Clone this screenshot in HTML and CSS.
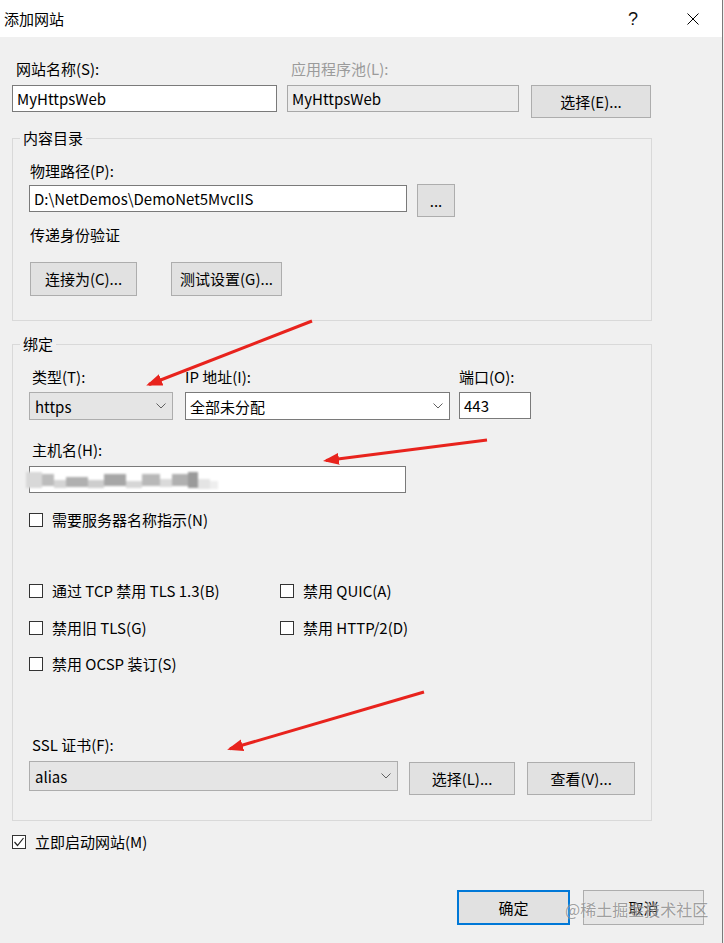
FILE: index.html
```html
<!DOCTYPE html>
<html lang="zh-CN">
<head>
<meta charset="utf-8">
<title>添加网站</title>
<link rel="stylesheet" href="styles.css">
</head>
<body>
<div class="window">
  <div class="titlebar">
    <span class="title">添加网站</span>
    <span class="help">?</span>
    <span class="close">
      <svg width="12" height="12" viewBox="0 0 12 12"><path d="M0.5 0.5 L11.5 11.5 M11.5 0.5 L0.5 11.5" stroke="#000" stroke-width="1" fill="none"/></svg>
    </span>
  </div>

  <div class="content">
    <div class="site-grid">
      <div class="lbl lbl-top">网站名称(S):</div>
      <div class="lbl lbl-top disabled">应用程序池(L):</div>
      <div></div>
      <div class="textbox tb-name">MyHttpsWeb</div>
      <div class="textbox readonly tb-pool">MyHttpsWeb</div>
      <button class="btn btn-pool">选择(E)...</button>
    </div>

    <fieldset class="group group-content">
      <legend>内容目录</legend>
      <div class="lbl lbl-g1 path-label">物理路径(P):</div>
      <div class="path-row">
        <div class="textbox tb-path">D:\NetDemos\DemoNet5MvcIIS</div>
        <button class="btn btn-dots">...</button>
      </div>
      <div class="lbl lbl-g1 auth-label">传递身份验证</div>
      <div class="auth-row">
        <button class="btn btn-connect">连接为(C)...</button>
        <button class="btn btn-test">测试设置(G)...</button>
      </div>
    </fieldset>

    <fieldset class="group group-binding">
      <legend>绑定</legend>
      <div class="bind-grid">
        <div class="lbl lbl-g2">类型(T):</div>
        <div class="lbl lbl-g2 lbl-ip">IP 地址(I):</div>
        <div class="lbl lbl-g2 lbl-port">端口(O):</div>
        <div class="combo combo-list sel-type"><span>https</span><svg class="chev" width="10" height="6" viewBox="0 0 10 6"><polyline points="0.5,0.5 5,5 9.5,0.5" fill="none" stroke="#606060" stroke-width="1"/></svg></div>
        <div class="combo sel-ip"><span>全部未分配</span><svg class="chev" width="10" height="6" viewBox="0 0 10 6"><polyline points="0.5,0.5 5,5 9.5,0.5" fill="none" stroke="#606060" stroke-width="1"/></svg></div>
        <div class="textbox tb-port">443</div>
      </div>

      <div class="lbl lbl-g2 host-label">主机名(H):</div>
      <div class="textbox tb-host">
        <span class="blur">
          <i class="b b1"></i><i class="b b2"></i><i class="b b3"></i><i class="b b4"></i><i class="b b5"></i><i class="b b6"></i><i class="b b7"></i><i class="b b8"></i><i class="b b9"></i><i class="b b10"></i><i class="b b11"></i><i class="b b12"></i><i class="b b13"></i>
        </span>
      </div>

      <div class="check sni-check"><span class="box"></span><span class="ctext">需要服务器名称指示(N)</span></div>

      <div class="check-grid">
        <div class="check"><span class="box"></span><span class="ctext">通过 TCP 禁用 TLS 1.3(B)</span></div>
        <div class="check"><span class="box"></span><span class="ctext">禁用 QUIC(A)</span></div>
        <div class="check"><span class="box"></span><span class="ctext">禁用旧 TLS(G)</span></div>
        <div class="check"><span class="box"></span><span class="ctext">禁用 HTTP/2(D)</span></div>
        <div class="check"><span class="box"></span><span class="ctext">禁用 OCSP 装订(S)</span></div>
      </div>

      <div class="lbl lbl-g2 ssl-label">SSL 证书(F):</div>
      <div class="ssl-row">
        <div class="combo combo-list sel-ssl"><span>alias</span><svg class="chev" width="10" height="6" viewBox="0 0 10 6"><polyline points="0.5,0.5 5,5 9.5,0.5" fill="none" stroke="#606060" stroke-width="1"/></svg></div>
        <button class="btn btn-ssl-select">选择(L)...</button>
        <button class="btn btn-ssl-view">查看(V)...</button>
      </div>
    </fieldset>

    <div class="check start-check"><span class="box checked"><svg width="12" height="12" viewBox="0 0 12 12"><polyline points="1.5,6 4.5,9.5 10.5,2" fill="none" stroke="#222" stroke-width="1.2"/></svg></span><span class="ctext">立即启动网站(M)</span></div>

    <div class="footer">
      <button class="btn btn-ok">确定</button>
      <button class="btn btn-cancel">取消</button>
    </div>
  </div>

  <div class="watermark">@稀土掘金技术社区</div>

  <svg class="arrows" width="724" height="943" viewBox="0 0 724 943">
    <defs>
      <marker id="ah" markerUnits="userSpaceOnUse" markerWidth="16" markerHeight="12" refX="13" refY="6" orient="auto">
        <path d="M0,0 L16,6 L0,12 Z" fill="#e8231d"/>
      </marker>
    </defs>
    <line x1="312" y1="321" x2="149" y2="384.5" stroke="#e8231d" stroke-width="3" marker-end="url(#ah)"/>
    <line x1="487" y1="440" x2="326" y2="460.5" stroke="#e8231d" stroke-width="3" marker-end="url(#ah)"/>
    <line x1="424" y1="692" x2="230" y2="748.8" stroke="#e8231d" stroke-width="3" marker-end="url(#ah)"/>
  </svg>
</div>
</body>
</html>
```

FILE: styles.css
```css
* { box-sizing: border-box; }

html, body {
  margin: 0;
  padding: 0;
  background: #f0f0f0;
}

body {
  font-family: "Noto Sans CJK SC", "Noto Sans", sans-serif;
  font-size: 15px;
  color: #000;
}

.window {
  position: relative;
  width: 723px;
  height: 943px;
  background: #f0f0f0;
  border-right: 1px solid #7a7a7a;
  overflow: hidden;
}

.titlebar {
  height: 37px;
  background: #fff;
  display: flex;
  align-items: center;
  padding-left: 4px;
}

.title {
  font-size: 15px;
  line-height: 20px;
  flex: 1;
}

.help {
  font-family: "Liberation Sans", sans-serif;
  font-size: 18px;
  line-height: 20px;
  width: 12px;
  text-align: center;
  margin-right: 48px;
  color: #111;
}

.close {
  width: 12px;
  height: 12px;
  display: flex;
  margin-right: 23px;
}

.content {
  padding: 22px 18px 0 12px;
}

.lbl {
  height: 20px;
  line-height: 20px;
  white-space: nowrap;
}

.lbl-top { padding-left: 4px; }
.lbl-g1 { padding-left: 1px; }
.lbl-g2 { padding-left: 3px; }
.lbl-ip, .lbl-port { padding-left: 0; }
.disabled { color: #9b9b9b; }

.site-grid {
  display: grid;
  grid-template-columns: 275px 244px 120px;
  grid-template-rows: 20px auto;
  row-gap: 6px;
  align-items: start;
}

.textbox {
  height: 27px;
  background: #fff;
  border: 1px solid #7a7a7a;
  padding: 0 4px;
  line-height: 25px;
  white-space: nowrap;
  overflow: hidden;
}

.readonly {
  background: #ececec;
  border-color: #a8a8a8;
}

.tb-name { width: 265px; }
.tb-pool { width: 232px; }

.btn {
  font-family: inherit;
  font-size: 15px;
  color: #000;
  background: #e1e1e1;
  border: 1px solid #adadad;
  padding: 0;
  margin: 0;
  line-height: 20px;
  display: flex;
  align-items: center;
  justify-content: center;
}

.btn-pool { width: 120px; height: 33px; }

.group {
  margin: 10px 0 0 0;
  width: 640px;
  border: 1px solid #d9d9d9;
  padding: 0 16px;
  min-width: 0;
}

.group legend {
  padding: 0 3px;
  margin-left: -9px;
  line-height: 20px;
  height: 20px;
  font-size: 15px;
}

.group-content { padding-bottom: 24px; }
.group-binding { margin-top: 13px; padding-bottom: 25px; }

.path-label { margin-top: 13px; }

.path-row {
  margin-top: 3px;
  display: flex;
  align-items: flex-start;
  gap: 10px;
}

.tb-path { width: 378px; margin-top: 1px; }
.btn-dots { width: 38px; height: 33px; }

.auth-label { margin-top: 8px; }

.auth-row {
  margin-top: 17px;
  display: flex;
  gap: 34px;
  padding-left: 1px;
}

.btn-connect { width: 107px; height: 34px; }
.btn-test { width: 111px; height: 34px; }

.bind-grid {
  margin-top: 13px;
  display: grid;
  grid-template-columns: 156px 274px 72px;
  grid-template-rows: 20px auto;
  row-gap: 5px;
  align-items: start;
}

.combo {
  height: 28px;
  border: 1px solid #7a7a7a;
  background: #fff;
  display: flex;
  align-items: center;
  justify-content: space-between;
  padding: 0 6px 0 4px;
  white-space: nowrap;
}

.combo-list {
  background: #e5e5e5;
  border-color: #adadad;
  padding-left: 5px;
}

.sel-type { width: 144px; }
.sel-ip { width: 265px; }
.tb-port { width: 72px; }

.chev { flex: none; }

.host-label { margin-top: 20px; }

.tb-host {
  margin-top: 6px;
  width: 377px;
  overflow: visible;
  display: flex;
  align-items: center;
  padding-left: 0;
}

.blur {
  display: flex;
  align-items: center;
  height: 22px;
  margin-left: -4px;
  filter: blur(1.3px);
}

.b {
  display: block;
  height: 12px;
  background: #bdbdbd;
}

.b1 { width: 16px; background: #d8d8d8; height: 16px; }
.b2 { width: 12px; background: #bcbcbc; }
.b3 { width: 12px; background: #d4d4d4; height: 8px; margin-top: 8px; }
.b4 { width: 22px; background: #b0b0b0; height: 10px; margin-top: 4px; }
.b5 { width: 16px; background: #cdcdcd; height: 8px; margin-top: 8px; }
.b6 { width: 22px; background: #a6a6a6; }
.b7 { width: 16px; background: #d6d6d6; height: 7px; margin-top: 9px; }
.b8 { width: 18px; background: #b8b8b8; }
.b9 { width: 12px; background: #dadada; height: 8px; margin-top: 6px; }
.b10 { width: 16px; background: #b0b0b0; height: 12px; }
.b11 { width: 10px; background: #9a9a9a; height: 16px; }
.b12 { width: 12px; background: #e4e4e4; height: 10px; margin-top: 8px; }
.b13 { width: 8px; background: #eeeeee; height: 8px; margin-top: 10px; }

.check {
  display: flex;
  align-items: center;
  height: 20px;
  line-height: 20px;
  white-space: nowrap;
}

.box {
  width: 14px;
  height: 14px;
  border: 1px solid #333;
  background: #fff;
  flex: none;
  margin-right: 9px;
  display: flex;
  align-items: center;
  justify-content: center;
}

.sni-check { margin-top: 17px; }

.check-grid {
  margin-top: 51px;
  display: grid;
  grid-template-columns: 251px auto;
  grid-auto-rows: 20px;
  row-gap: 16.5px;
}

.ssl-label { margin-top: 61px; }

.ssl-row {
  margin-top: 6px;
  display: flex;
  align-items: flex-start;
}

.sel-ssl { width: 370px; height: 30px; }
.btn-ssl-select { width: 107px; height: 33px; margin: 1px 0 0 11px; }
.btn-ssl-view { width: 108px; height: 33px; margin: 1px 0 0 12px; }

.start-check { margin-top: 11px; }

.footer {
  margin-top: 38px;
  display: flex;
  justify-content: flex-end;
  gap: 13px;
}

.btn-ok {
  width: 113px;
  height: 35px;
  border: 2px solid #0078d7;
}

.btn-cancel {
  width: 121px;
  height: 35px;
  background: #e6e6e6;
}

.watermark {
  position: absolute;
  left: 565px;
  top: 898px;
  font-size: 16px;
  line-height: 22px;
  color: rgba(110, 110, 110, 0.65);
  text-shadow: 0 0 2px rgba(255, 255, 255, 0.8);
  white-space: nowrap;
  pointer-events: none;
}

.arrows {
  position: absolute;
  left: 0;
  top: 0;
  pointer-events: none;
}
```
